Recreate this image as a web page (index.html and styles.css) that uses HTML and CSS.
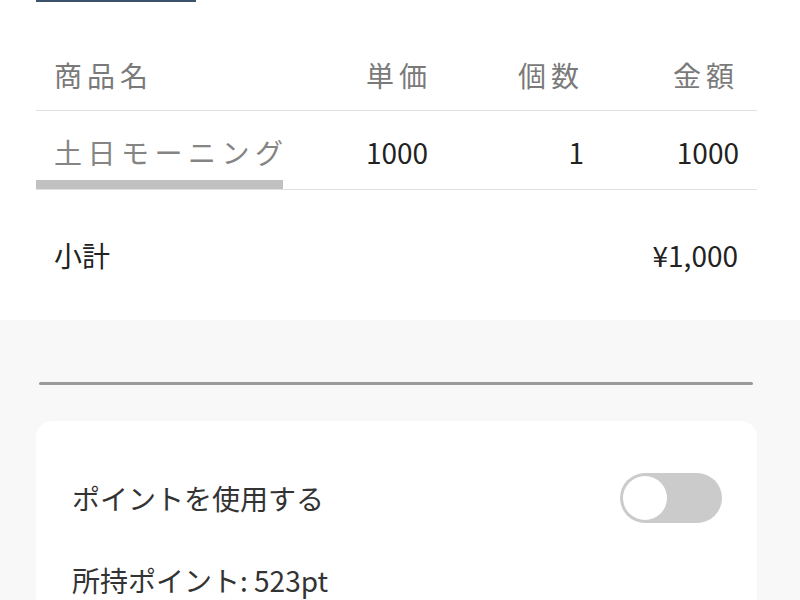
FILE: index.html
```html
<!DOCTYPE html>
<html lang="ja">
<head>
<meta charset="utf-8">
<link rel="stylesheet" href="styles.css">
</head>
<body>
<section class="order">
  <div class="tabline"></div>
  <div class="table">
    <div class="row head">
      <div class="cell name">商品名</div>
      <div class="cell price">単価</div>
      <div class="cell qty">個数</div>
      <div class="cell amount">金額</div>
    </div>
    <div class="row item">
      <div class="cell name">
        <span class="item-name">土日モーニング</span>
        <div class="scrollbar"></div>
      </div>
      <div class="cell price">1000</div>
      <div class="cell qty">1</div>
      <div class="cell amount">1000</div>
    </div>
    <div class="subtotal">
      <span>小計</span>
      <span>¥1,000</span>
    </div>
  </div>
</section>
<section class="points">
  <div class="divider"></div>
  <div class="card">
    <div class="toggle-row">
      <span>ポイントを使用する</span>
      <span class="switch"><span class="knob"></span></span>
    </div>
    <div class="balance">所持ポイント: 523pt</div>
  </div>
</section>
</body>
</html>
```

FILE: styles.css
```css
html, body {
  margin: 0;
  padding: 0;
}
body {
  background: #f8f8f8;
  font-family: "Noto Sans CJK JP", "Noto Sans", sans-serif;
  font-size: 28px;
  color: #333;
  width: 800px;
  height: 600px;
  overflow: hidden;
}
.order {
  background: #fff;
  padding: 0 43px 0 36px;
}
.tabline {
  width: 160px;
  height: 2px;
  background: #3b526b;
}
.table {
  margin-top: 40px;
}
.row {
  display: grid;
  grid-template-columns: 312px 1fr 1fr 155px;
  border-bottom: 1px solid #e0e0e0;
}
.cell {
  line-height: 40px;
}
.head .cell {
  padding: 13px 18px 15px;
  color: #7a7a7a;
  letter-spacing: 5px;
}
.item .cell {
  padding: 21px 18px 0;
  color: #222;
}
.head .price, .item .price {
  padding-left: 18px;
}
.qty, .amount {
  text-align: right;
}
.head .qty, .head .amount {
  padding-right: 18px;
}
.item .name {
  padding-left: 0;
  padding-right: 0;
  overflow: hidden;
}
.item-name {
  display: block;
  padding-left: 18px;
  color: #858585;
  letter-spacing: 5.5px;
  white-space: nowrap;
}
.scrollbar {
  margin-top: 8px;
  width: 247px;
  height: 9px;
  background: #c1c1c1;
}
.subtotal {
  display: flex;
  justify-content: space-between;
  padding: 45px 19px 45px 18px;
  line-height: 40px;
  color: #222;
}
.points {
  padding: 62px 43px 0 36px;
}
.divider {
  height: 3px;
  margin: 0 4px 0 3px;
  background: #9a9a9a;
  border-radius: 2px;
}
.card {
  margin-top: 36px;
  background: #fff;
  border-radius: 16px 16px 0 0;
  padding: 52px 35px 0 36px;
  height: 179px;
  box-sizing: border-box;
}
.toggle-row {
  display: flex;
  justify-content: space-between;
  align-items: center;
  height: 50px;
}
.switch {
  display: flex;
  align-items: center;
  width: 102px;
  height: 50px;
  border-radius: 25px;
  background: #cbcbcb;
  padding: 0 3px;
  box-sizing: border-box;
}
.knob {
  width: 44px;
  height: 44px;
  border-radius: 50%;
  background: #fff;
}
.balance {
  margin-top: 37px;
  line-height: 40px;
}
```
